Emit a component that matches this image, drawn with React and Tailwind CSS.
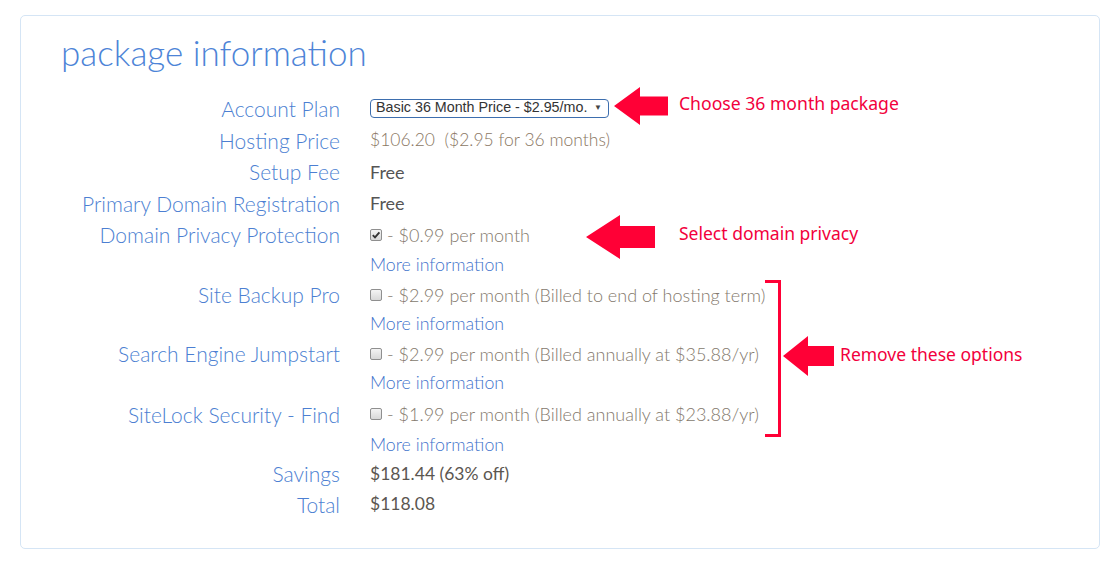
import React from "react";

const LATO = { fontFamily: "Lato, 'Open Sans', sans-serif" };
const ANNO = { fontFamily: "'Noto Sans', 'Open Sans', sans-serif" };

function Checkbox({ checked }) {
  return (
    <span className="inline-flex w-[12px] h-[12px] rounded-[2px] border border-[#8f8f8f] bg-gradient-to-b from-[#f4f4f4] to-[#d8d8d8] items-center justify-center mr-[5px] shrink-0">
      {checked && (
        <svg width="10" height="10" viewBox="0 0 10 10">
          <path d="M1.8 5.2 L4 7.4 L8.4 2.4" fill="none" stroke="#333" strokeWidth="1.9" />
        </svg>
      )}
    </span>
  );
}

function LeftArrow({ w, h, shaft, head }) {
  const mid = h / 2;
  const s1 = mid - shaft / 2;
  const s2 = mid + shaft / 2;
  return (
    <svg width={w} height={h} viewBox={`0 0 ${w} ${h}`}>
      <polygon
        points={`0,${mid} ${head},0 ${head},${s1} ${w},${s1} ${w},${s2} ${head},${s2} ${head},${h}`}
        fill="#ff0036"
      />
    </svg>
  );
}

function Row({ h, label, children }) {
  return (
    <div className="flex items-center" style={{ height: h }}>
      <div className="w-[279px] text-right text-[21px] font-light text-[#4c7fd2] leading-none whitespace-nowrap">
        {label}
      </div>
      <div className="ml-[30px] flex items-center whitespace-nowrap">{children}</div>
    </div>
  );
}

function More({ h }) {
  return (
    <Row h={h} label="">
      <span className="text-[17.8px] font-light text-[#3f74cc] leading-none">More information</span>
    </Row>
  );
}

function Option({ checked, children }) {
  return (
    <span className="flex items-center text-[18px] text-[#84796d] font-light leading-none">
      <Checkbox checked={checked} />
      <span>{children}</span>
    </span>
  );
}

export default function App() {
  return (
    <div className="w-[1115px] h-[567px] bg-white pt-[15px] pl-[20px]" style={LATO}>
      <div className="relative w-[1080px] h-[534px] border border-[#d5e5f5] rounded-[5px] px-[40px]">
        <div className="mt-[14px] h-[44px] flex items-center text-[35px] font-light text-[#4d84d7] leading-none">
          package information
        </div>
        <div className="mt-[18px]">
          <Row h={32} label="Account Plan">
            <div
              className="flex items-center w-[239px] h-[19px] border border-[#3d6eae] rounded-[4px] pl-[5px] pr-[6px] text-[14.3px] text-[#333] justify-between"
              style={{ fontFamily: "'Liberation Sans', Arial, sans-serif" }}
            >
              <span>Basic 36 Month Price - $2.95/mo.</span>
              <span className="text-[8px] text-[#444]">▼</span>
            </div>
          </Row>
          <Row h={32} label="Hosting Price">
            <span className="text-[17.5px] font-light text-[#8a7763] leading-none">$106.20&nbsp; ($2.95 for 36 months)</span>
          </Row>
          <Row h={31} label="Setup Fee">
            <span className="text-[18px] text-[#555] leading-none">Free</span>
          </Row>
          <Row h={32} label="Primary Domain Registration">
            <span className="text-[18px] text-[#555] leading-none">Free</span>
          </Row>
          <Row h={31} label="Domain Privacy Protection">
            <Option checked>- $0.99 per month</Option>
          </Row>
          <More h={30} />
          <Row h={29} label="Site Backup Pro">
            <Option>- $2.99 per month (Billed to end of hosting term)</Option>
          </Row>
          <More h={30} />
          <Row h={29} label="Search Engine Jumpstart">
            <Option>- $2.99 per month (Billed annually at $35.88/yr)</Option>
          </Row>
          <More h={30} />
          <Row h={32} label="SiteLock Security - Find">
            <Option>- $1.99 per month (Billed annually at $23.88/yr)</Option>
          </Row>
          <More h={29} />
          <Row h={29} label="Savings">
            <span className="text-[17.5px] text-[#5b5650] leading-none">$181.44 (63% off)</span>
          </Row>
          <Row h={32} label="Total">
            <span className="text-[17.5px] text-[#5b5650] leading-none">$118.08</span>
          </Row>
        </div>

        {/* Annotation 1 */}
        <div className="absolute left-[593px] top-[71px]">
          <LeftArrow w={54} h={38} shaft={19} head={26} />
        </div>
        <div className="absolute left-[658px] top-[79px] text-[17.6px] text-[#f2003c] leading-none whitespace-nowrap" style={ANNO}>
          Choose 36 month package
        </div>

        {/* Annotation 2 */}
        <div className="absolute left-[565px] top-[199px]">
          <LeftArrow w={69} h={44} shaft={22} head={34} />
        </div>
        <div className="absolute left-[658px] top-[209px] text-[17.5px] text-[#f2003c] leading-none whitespace-nowrap" style={ANNO}>
          Select domain privacy
        </div>

        {/* Bracket */}
        <div className="absolute left-[744px] top-[264px] w-[16px] h-[157px] border-t-[3px] border-r-[3px] border-b-[3px] border-[#ff0036]" />

        {/* Annotation 3 */}
        <div className="absolute left-[762px] top-[320px]">
          <LeftArrow w={51} h={40} shaft={20} head={25} />
        </div>
        <div className="absolute left-[819px] top-[330px] text-[17.5px] text-[#f2003c] leading-none whitespace-nowrap" style={ANNO}>
          Remove these options
        </div>
      </div>
    </div>
  );
}
